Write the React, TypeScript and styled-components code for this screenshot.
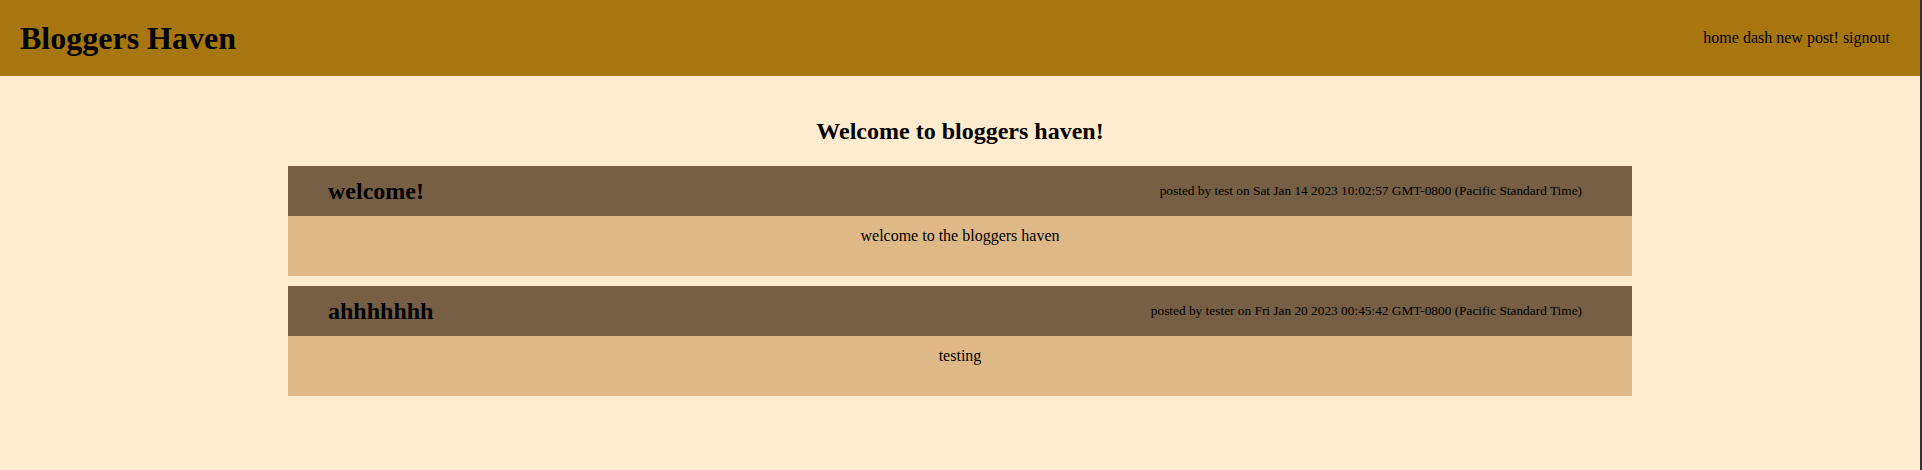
import React from "react";
import styled, { createGlobalStyle } from "styled-components";

const GlobalStyle = createGlobalStyle`
  html, body {
    margin: 0;
    padding: 0;
    background: #333333;
  }
  body {
    font-family: "Liberation Serif", "Times New Roman", serif;
    color: #000;
  }
`;

const Page = styled.div`
  width: 1920px;
  min-height: 470px;
  background: #ffebcd;
`;

const TopBar = styled.header`
  height: 76px;
  background: #a8760f;
  display: flex;
  align-items: center;
  justify-content: space-between;
  padding: 0 30px 0 20px;
  box-sizing: border-box;
`;

const Brand = styled.h1`
  margin: 0;
  font-size: 32px;
  font-weight: bold;
`;

const Nav = styled.nav`
  display: flex;
  gap: 4px;
  font-size: 16px;
`;

const NavLink = styled.span`
  cursor: pointer;
`;

const Main = styled.main`
  padding-top: 42px;
`;

const Heading = styled.h2`
  margin: 0 0 21px;
  font-size: 24px;
  font-weight: bold;
  text-align: center;
`;

const PostList = styled.div`
  margin: 0 auto;
  width: 70%;
  display: flex;
  flex-direction: column;
  gap: 10px;
`;

const Card = styled.article``;

const CardHead = styled.div`
  height: 50px;
  background: #765f44;
  display: flex;
  align-items: center;
  justify-content: space-between;
  padding: 0 50px 0 40px;
  box-sizing: border-box;
`;

const Title = styled.h3`
  margin: 0;
  font-size: 24px;
  font-weight: bold;
`;

const Meta = styled.span`
  font-size: 13.333px;
`;

const CardBody = styled.div`
  height: 60px;
  box-sizing: border-box;
  background: #deb887;
  padding-top: 11px;
  text-align: center;
  font-size: 16px;
`;

const posts = [
  {
    title: "welcome!",
    meta: "posted by test on Sat Jan 14 2023 10:02:57 GMT-0800 (Pacific Standard Time)",
    body: "welcome to the bloggers haven",
  },
  {
    title: "ahhhhhhh",
    meta: "posted by tester on Fri Jan 20 2023 00:45:42 GMT-0800 (Pacific Standard Time)",
    body: "testing",
  },
];

export default function App() {
  return (
    <>
      <GlobalStyle />
      <Page>
        <TopBar>
          <Brand>Bloggers Haven</Brand>
          <Nav>
            <NavLink>home</NavLink>
            <NavLink>dash</NavLink>
            <NavLink>new post!</NavLink>
            <NavLink>signout</NavLink>
          </Nav>
        </TopBar>
        <Main>
          <Heading>Welcome to bloggers haven!</Heading>
          <PostList>
            {posts.map((p) => (
              <Card key={p.title}>
                <CardHead>
                  <Title>{p.title}</Title>
                  <Meta>{p.meta}</Meta>
                </CardHead>
                <CardBody>{p.body}</CardBody>
              </Card>
            ))}
          </PostList>
        </Main>
      </Page>
    </>
  );
}
